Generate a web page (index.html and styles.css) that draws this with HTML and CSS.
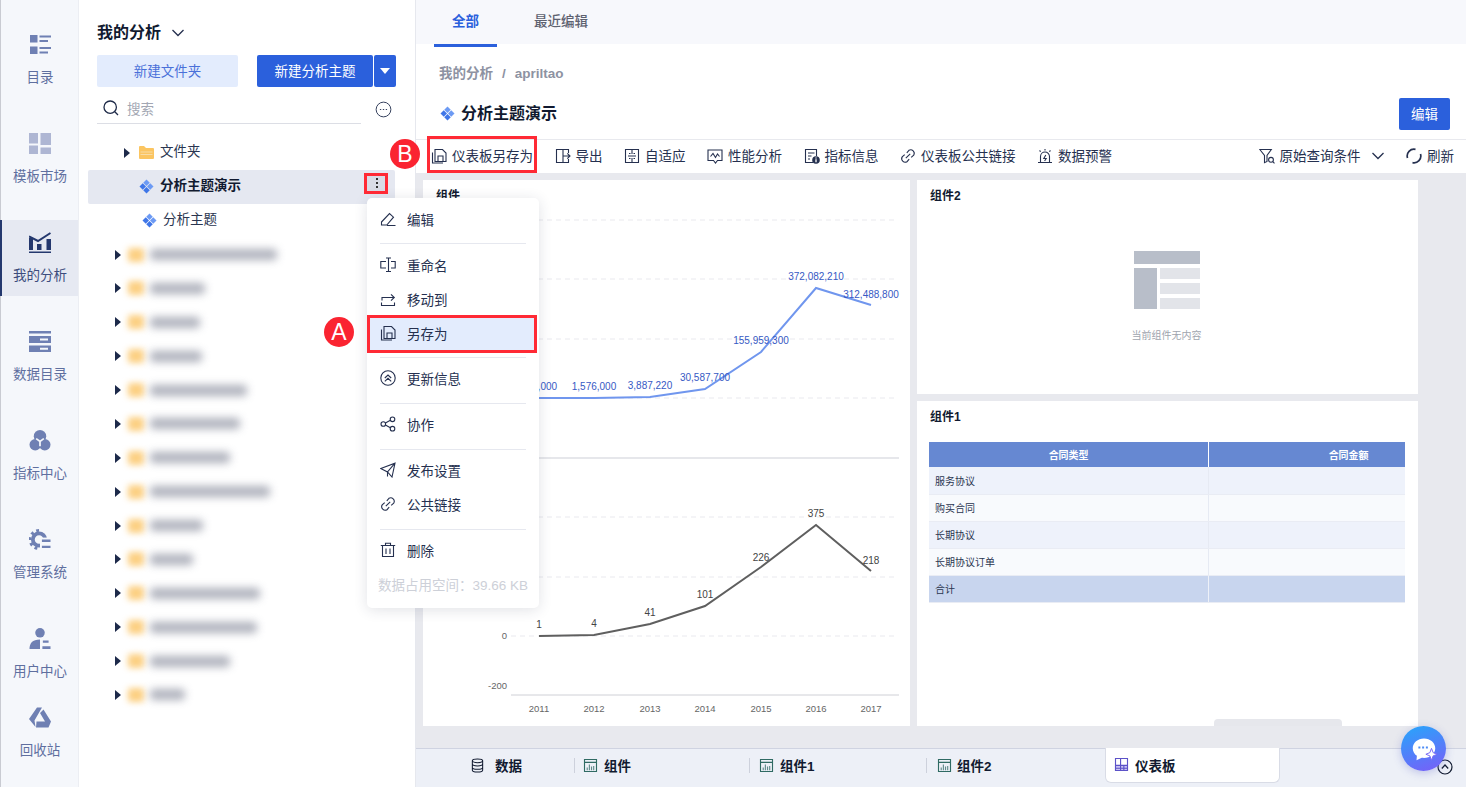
FILE: index.html
```html
<!DOCTYPE html>
<html lang="zh-CN">
<head>
<meta charset="utf-8">
<title>我的分析</title>
<link rel="stylesheet" href="styles.css">
</head>
<body>
<svg class="defs" aria-hidden="true">
  <symbol id="i-diamond" viewBox="0 0 16 16">
    <path fill="#6c9af4" d="M8 .5 11.500 4 8 7.500 4.500 4z"/>
    <path fill="#3f76e8" d="M4 4.500 7.500 8 4 11.500.5 8z"/>
    <path fill="#6c9af4" d="M12 4.500 15.500 8 12 11.500 8.500 8z"/>
    <path fill="#3f76e8" d="M8 8.500 11.500 12 8 15.500 4.500 12z"/>
  </symbol>
  <symbol id="i-saveas" viewBox="0 0 16 16"><path d="M4 1.500h7.500L15 5v8.500H4zM7 13.500V8h5v5.500M1.500 4.500v10.500h10.500"/></symbol>
  <symbol id="i-link" viewBox="0 0 16 16"><path d="M6.800 4.800 8.900 2.300a3.500 3.500 0 0 1 4.800 4.800L11.200 9.300M9.200 11.200 7 13.700a3.500 3.500 0 0 1-4.800-4.800L4.700 6.700M5.800 10.200l4.400-4.400"/></symbol>
  <symbol id="i-chart" viewBox="0 0 16 16"><path fill="none" stroke="#2f6a63" stroke-width="1.200" d="M1.600 1.600h12.800v12.800H1.600zM1.600 4.600h12.800"/><path fill="none" stroke="#5f8a8a" stroke-width="1.200" d="M4.500 13v-3M6.800 13V7M9.100 13v-4M11.400 13V8.500"/></symbol>
</svg>

<div class="app">
  <nav class="nav">
    <a class="nav-item">
      <svg class="nav-ic" viewBox="0 0 22 21"><path fill="#6f80b3" d="M1 1h7.500v7.500H1zM1 12.500h7.500V20H1zM10.500 1.500H22v2H10.500zM10.500 6H19v2h-8.500zM10.500 13H22v2H10.500zM10.500 17.500H19v2h-8.500z"/></svg>
      <span>目录</span>
    </a>
    <a class="nav-item">
      <svg class="nav-ic" viewBox="0 0 22 21"><path fill="#aeb6d3" d="M0 0h9v10.500H0zM11.500 0H22v12H11.500zM0 12.500h9V21H0zM11.500 14.500H22V21H11.500z"/></svg>
      <span>模板市场</span>
    </a>
    <a class="nav-item is-active">
      <svg class="nav-ic" viewBox="0 0 22 21"><path fill="#24386e" d="M0 6h4v12H0zM8 12h4.500v6H8zM17.500 7H22v11h-4.500zM0 19.500h22V21H0z"/><path fill="none" stroke="#24386e" stroke-width="2" d="M0 4.500l9 4.500 12.500-8"/></svg>
      <span>我的分析</span>
    </a>
    <a class="nav-item">
      <svg class="nav-ic" viewBox="0 0 22 21"><path fill="#6f80b3" d="M0 0h22v2.500H0zM0 5h22v7H0zM0 14.500h22V21H0z"/><path fill="#f5f7fb" d="M11 7.500h8v2h-8zM11 16.800h8v2h-8z"/></svg>
      <span>数据目录</span>
    </a>
    <a class="nav-item">
      <svg class="nav-ic" viewBox="0 0 22 22"><circle cx="11" cy="6.500" r="6.500" fill="#6f80b3"/><circle cx="6" cy="15.500" r="6" fill="#6f80b3"/><circle cx="16" cy="15.500" r="6" fill="#6f80b3"/><path fill="none" stroke="#f5f7fb" stroke-width="1.800" d="M7 9l4 3 4-3M11 12v5"/></svg>
      <span>指标中心</span>
    </a>
    <a class="nav-item">
      <svg class="nav-ic" viewBox="0 0 22 22"><circle cx="10" cy="11" r="6.500" fill="none" stroke="#6f80b3" stroke-width="4"/><path fill="none" stroke="#6f80b3" stroke-width="3" stroke-dasharray="3 3.200" d="M10 1.500a9.500 9.500 0 1 0 0 19"/><path fill="#f5f7fb" d="M11 9h11v13H11z"/><path fill="#6f80b3" d="M13 11h9v2.500h-9zM13 17.500h9V20h-9z"/></svg>
      <span>管理系统</span>
    </a>
    <a class="nav-item">
      <svg class="nav-ic" viewBox="0 0 22 22"><circle cx="11" cy="5" r="5" fill="#6f80b3"/><path fill="#6f80b3" d="M0 22c0-6 3-10 11-10v10zM14 13h6v2.500h-6zM13.500 19H22v3h-8.500z"/></svg>
      <span>用户中心</span>
    </a>
    <a class="nav-item nav-last">
      <svg class="nav-ic" viewBox="0 0 22 21"><path fill="#6f80b3" d="M8 .5h5L5.500 13.500 6.500 20 0 12zM14.500 2.500 22 14.500h-6L11 6zM7.500 14.500H22l-2.500 6H7z"/></svg>
      <span>回收站</span>
    </a>
  </nav>

  <aside class="panel">
    <div class="panel-head">
      <h2>我的分析</h2>
      <svg class="chev" viewBox="0 0 14 14"><path d="M1.500 4 7 9.500 12.500 4"/></svg>
    </div>
    <div class="panel-btns">
      <button class="btn btn-light">新建文件夹</button>
      <button class="btn btn-blue btn-new">新建分析主题</button>
      <button class="btn btn-blue btn-arrow"><i class="tri-down"></i></button>
    </div>
    <div class="search-row">
      <div class="search">
        <svg class="search-ic" viewBox="0 0 16 16"><circle cx="7.200" cy="7.200" r="6.200"/><path d="M11.800 11.800 15 15"/></svg>
        <span>搜索</span>
      </div>
      <svg class="more-ic" viewBox="0 0 18 18"><circle cx="9" cy="9" r="7.800"/><path d="M5.200 9h1.400M8.300 9h1.400M11.400 9h1.400"/></svg>
    </div>

    <ul class="tree">
      <li class="row row-l1">
        <i class="tri"></i>
        <svg class="folder" viewBox="0 0 15 13"><path fill="#fbc561" d="M0 1a1 1 0 0 1 1-1h4l2 2h7a1 1 0 0 1 1 1v9a1 1 0 0 1-1 1H1a1 1 0 0 1-1-1z"/><path fill="#f8dca6" d="M1.500 5.500h12v1h-12zM1.500 8h12v1h-12z"/></svg>
        <span>文件夹</span>
      </li>
      <li class="row row-sel">
        <svg class="dia"><use href="#i-diamond"/></svg>
        <b>分析主题演示</b>
        <span class="kebab"><i></i><i></i><i></i></span>
      </li>
      <li class="row row-l2">
        <svg class="dia"><use href="#i-diamond"/></svg>
        <span>分析主题</span>
      </li>
      <li class="row row-blur"><i class="tri"></i><i class="blur-f"></i><i class="blur-t" style="width:127px"></i></li>
      <li class="row row-blur"><i class="tri"></i><i class="blur-f"></i><i class="blur-t" style="width:55px"></i></li>
      <li class="row row-blur"><i class="tri"></i><i class="blur-f"></i><i class="blur-t" style="width:50px"></i></li>
      <li class="row row-blur"><i class="tri"></i><i class="blur-f"></i><i class="blur-t" style="width:52px"></i></li>
      <li class="row row-blur"><i class="tri"></i><i class="blur-f"></i><i class="blur-t" style="width:97px"></i></li>
      <li class="row row-blur"><i class="tri"></i><i class="blur-f"></i><i class="blur-t" style="width:90px"></i></li>
      <li class="row row-blur"><i class="tri"></i><i class="blur-f"></i><i class="blur-t" style="width:80px"></i></li>
      <li class="row row-blur"><i class="tri"></i><i class="blur-f"></i><i class="blur-t" style="width:120px"></i></li>
      <li class="row row-blur"><i class="tri"></i><i class="blur-f"></i><i class="blur-t" style="width:53px"></i></li>
      <li class="row row-blur"><i class="tri"></i><i class="blur-f"></i><i class="blur-t" style="width:43px"></i></li>
      <li class="row row-blur"><i class="tri"></i><i class="blur-f"></i><i class="blur-t" style="width:110px"></i></li>
      <li class="row row-blur"><i class="tri"></i><i class="blur-f"></i><i class="blur-t" style="width:107px"></i></li>
      <li class="row row-blur"><i class="tri"></i><i class="blur-f"></i><i class="blur-t" style="width:80px"></i></li>
      <li class="row row-blur"><i class="tri"></i><i class="blur-f"></i><i class="blur-t" style="width:35px"></i></li>
    </ul>
  </aside>

  <main class="main">
    <div class="tabs">
      <a class="tab is-on">全部</a>
      <a class="tab">最近编辑</a>
    </div>
    <div class="crumbs"><span>我的分析</span><span class="sl">/</span><span>apriltao</span></div>
    <div class="title-row">
      <svg class="dia"><use href="#i-diamond"/></svg>
      <h1>分析主题演示</h1>
      <button class="btn btn-blue btn-edit">编辑</button>
    </div>
    <div class="toolbar">
      <a class="tool"><svg class="ic"><use href="#i-saveas"/></svg>仪表板另存为</a>
      <a class="tool"><svg class="ic" viewBox="0 0 16 16"><path d="M8 1.500H1.500v13H8zM8 1.500h5.500V5M13.500 11v3.500H8M8 8h7M12.300 5.300 15 8l-2.700 2.700"/></svg>导出</a>
      <a class="tool"><svg class="ic" viewBox="0 0 16 16"><path d="M1.500 1.500h13v13h-13zM8 1.500v4.500M8 10v4.500M4 8h8M5 5.500h1.500M9.500 5.500H11M5 10.500h1.500M9.500 10.500H11"/></svg>自适应</a>
      <a class="tool"><svg class="ic" viewBox="0 0 16 16"><path d="M1 2h14v10.500h-4.500L8.500 15l-2-2.500H1zM3.500 8.500 6 5.500l2.500 4 2-3.500 2 2.500"/></svg>性能分析</a>
      <a class="tool"><svg class="ic" viewBox="0 0 16 16"><path d="M9 14.500H1.500v-13h11V8M4 5h6.500M4 8h3.500M4 11h2"/><circle class="solid" cx="12" cy="12" r="3.800"/><path class="white" d="M12 11.200V14.200M12 9.600v.9"/></svg>指标信息</a>
      <a class="tool"><svg class="ic"><use href="#i-link"/></svg>仪表板公共链接</a>
      <a class="tool"><svg class="ic" viewBox="0 0 16 16"><path d="M3.500 14V8.500a4.500 4.500 0 0 1 9 0V14M1 14.500h14M8 1v1.500M2.500 2.500l1.200 1.200M13.500 2.500l-1.200 1.200M8.800 7 6.800 10.500h2.400l-1.600 2.500"/></svg>数据预警</a>
      <span class="tool-right">
        <a class="tool"><svg class="ic" viewBox="0 0 16 16"><path d="M.8 1.500h11.500L8 7.500v6l-2.500 1.200V7.500z"/><circle cx="12" cy="11.800" r="2.400"/><path d="M13.800 13.600 15.500 15.300"/></svg>原始查询条件<svg class="chev tool-chev" viewBox="0 0 14 14"><path d="M1.500 4 7 9.500 12.500 4"/></svg></a>
        <a class="tool"><svg class="ic ic-bold" viewBox="0 0 16 16"><path d="M1.500 10A6.800 6.800 0 0 1 9.500 1.400M14.500 6A6.800 6.800 0 0 1 6.500 14.600"/></svg>刷新</a>
      </span>
    </div>

    <div class="board">
      <section class="widget w-chart">
        <h3>组件</h3>
        <svg class="chart" viewBox="423 213 487 513">
          <g class="grid">
            <path d="M511 220H898M511 279H898M511 339H898M511 398H898M511 517H898M511 577H898M511 636H898"/>
          </g>
          <path class="split" d="M511 458H899"/>
          <path class="axis" d="M511 695H899"/>
          <polyline class="l-blue" points="539,398 594,398 650,397 705,389 761,352 816,288 871,305"/>
          <polyline class="l-gray" points="539,636 594,635 650,624 705,606 761,567 816,525 871,571"/>
          <g class="t-blue">
            <text x="539" y="390">520,000</text>
            <text x="594" y="390">1,576,000</text>
            <text x="650" y="389">3,887,220</text>
            <text x="705" y="381">30,587,700</text>
            <text x="761" y="344">155,959,300</text>
            <text x="816" y="280">372,082,210</text>
            <text x="871" y="298">312,488,800</text>
          </g>
          <g class="t-gray">
            <text x="539" y="628">1</text>
            <text x="594" y="627">4</text>
            <text x="650" y="616">41</text>
            <text x="705" y="598">101</text>
            <text x="761" y="561">226</text>
            <text x="816" y="517">375</text>
            <text x="871" y="564">218</text>
          </g>
          <g class="t-axis t-y">
            <text x="507" y="639">0</text>
            <text x="507" y="689">-200</text>
          </g>
          <g class="t-axis">
            <text x="539" y="712">2011</text>
            <text x="594" y="712">2012</text>
            <text x="650" y="712">2013</text>
            <text x="705" y="712">2014</text>
            <text x="761" y="712">2015</text>
            <text x="816" y="712">2016</text>
            <text x="871" y="712">2017</text>
          </g>
        </svg>
      </section>

      <section class="widget w-empty">
        <h3>组件2</h3>
        <div class="empty">
          <div class="ph">
            <i class="ph-top"></i><i class="ph-left"></i><i class="ph-r"></i><i class="ph-r"></i><i class="ph-r"></i>
          </div>
          <p>当前组件无内容</p>
        </div>
      </section>

      <section class="widget w-table">
        <h3>组件1</h3>
        <div class="tbl-wrap">
          <table class="tbl">
            <thead><tr><th>合同类型</th><th>合同金额</th></tr></thead>
            <tbody>
              <tr><td>服务协议</td><td></td></tr>
              <tr><td>购买合同</td><td></td></tr>
              <tr><td>长期协议</td><td></td></tr>
              <tr><td>长期协议订单</td><td></td></tr>
              <tr class="sum"><td>合计</td><td></td></tr>
            </tbody>
          </table>
        </div>
        <i class="hscroll"></i>
      </section>
    </div>

    <footer class="dock">
      <a class="dock-item d-data"><svg class="ic ic-db" viewBox="0 0 16 16"><ellipse cx="8" cy="3" rx="5.500" ry="2"/><path d="M2.500 3v10c0 1.100 2.500 2 5.500 2s5.500-.9 5.500-2V3M2.500 6.500c0 1.100 2.500 2 5.500 2s5.500-.9 5.500-2M2.500 10c0 1.100 2.500 2 5.500 2s5.500-.9 5.500-2"/></svg>数据</a>
      <a class="dock-item d-w1"><svg class="ic-chart"><use href="#i-chart"/></svg>组件</a>
      <a class="dock-item d-w2"><svg class="ic-chart"><use href="#i-chart"/></svg>组件1</a>
      <a class="dock-item d-w3"><svg class="ic-chart"><use href="#i-chart"/></svg>组件2</a>
      <a class="dock-item d-board"><svg class="ic-chart" viewBox="0 0 16 16"><path fill="#c9c3f3" d="M7 9h8v6H7zM1 9h6v6H1z"/><path fill="none" stroke="#5c52c8" stroke-width="1.200" d="M1.600 1.600h12.800v12.800H1.600zM7 1.600v12.800M1.600 9h12.800M1.600 12h12.800M10.500 9v5.400"/></svg>仪表板</a>
      <svg class="dock-up" viewBox="0 0 16 16"><circle cx="8" cy="8" r="7"/><path d="M4.800 9.500 8 6l3.200 3.500"/></svg>
    </footer>
  </main>

  <div class="menu">
    <a class="m-item"><svg class="ic" viewBox="0 0 16 16"><path d="M1.500 11 9.500 2.500l4 3.700L6.800 14H1.500zM7 14.500h8.500"/></svg>编辑</a>
    <hr>
    <a class="m-item"><svg class="ic" viewBox="0 0 16 16"><path d="M6 4.500H.8v6.500H6M11 4.500h4.200v6.500H11M6 1h5M6 14.500h5M8.500 1v13.500"/></svg>重命名</a>
    <a class="m-item"><svg class="ic" viewBox="0 0 16 16"><path d="M2 9.500V6.500h12M11 3.300l3.300 3.200-3.300 3.200M1.500 11.500v3h13v-3"/></svg>移动到</a>
    <a class="m-item is-hl"><svg class="ic"><use href="#i-saveas"/></svg>另存为</a>
    <hr>
    <a class="m-item"><svg class="ic" viewBox="0 0 16 16"><circle cx="8" cy="8" r="7.200"/><path d="M4.800 8 8 5l3.200 3M4.800 11.300 8 8.300l3.200 3"/></svg>更新信息</a>
    <hr>
    <a class="m-item"><svg class="ic" viewBox="0 0 16 16"><circle cx="3.300" cy="8" r="2.300"/><circle cx="12.500" cy="3.300" r="2.300"/><circle cx="12.500" cy="12.700" r="2.300"/><path d="M5.400 7 10.400 4.300M5.400 9 10.400 11.700"/></svg>协作</a>
    <hr>
    <a class="m-item"><svg class="ic" viewBox="0 0 16 16"><path d="M.8 6.500 15 1.200l-3 13.800-4.500-5zM15 1.200 7.500 10v4.500"/></svg>发布设置</a>
    <a class="m-item"><svg class="ic"><use href="#i-link"/></svg>公共链接</a>
    <hr>
    <a class="m-item"><svg class="ic" viewBox="0 0 16 16"><path d="M.8 3.500h14.400M5.500 3.500V1.200h5v2.300M2.500 3.500v11h11v-11M6 6.500v5.500M10 6.500v5.500"/></svg>删除</a>
    <p class="m-foot">数据占用空间：39.66 KB</p>
  </div>

  <i class="mark mark-kebab"></i>
  <i class="mark mark-menu"></i>
  <i class="mark mark-tool"></i>
  <b class="badge badge-a">A</b>
  <b class="badge badge-b">B</b>
  <div class="chat">
    <svg viewBox="0 0 24 24"><path fill="#fff" d="M12 3.500c-5 0-9 3.400-9 7.800 0 2.500 1.300 4.700 3.300 6.100L6 21l4.200-2c.6.100 1.200.1 1.800.1 5 0 9-3.400 9-7.800s-4-7.800-9-7.800z"/><path fill="#4d8cf5" d="M7.500 10h1.600v1.600H7.500zM10.500 10h1.600v1.600h-1.600zM13.500 10h1.600v1.600h-1.600z"/><path fill="#fff" stroke="#7b6cf6" stroke-width=".8" d="M18 11.500l1.300 3.400 3.200 1.300-3.200 1.300L18 21l-1.300-3.500-3.200-1.300 3.200-1.300z"/></svg>
  </div>
</div>
</body>
</html>
```

FILE: styles.css
```css
* { box-sizing: border-box; }
html, body { margin: 0; padding: 0; }
body {
  font-family: "Liberation Sans", "Noto Sans CJK SC", sans-serif;
  font-size: 13.5px;
  color: #1d2a4a;
  background: #fff;
}
h1, h2, h3, p, ul { margin: 0; padding: 0; }
ul { list-style: none; }
i { display: block; font-style: normal; }
button { font: inherit; border: 0; padding: 0; }
.defs { position: absolute; width: 0; height: 0; }

.app {
  position: relative;
  display: flex;
  width: 1466px;
  height: 787px;
  overflow: hidden;
}

/* left navigation */
.nav {
  flex: 0 0 79px;
  display: flex;
  flex-direction: column;
  padding-top: 22px;
  background: #f5f7fb;
  border-left: 1px solid #c9cbd2;
  border-right: 1px solid #eceef3;
}
.nav-item {
  flex: none;
  height: 76px;
  margin-bottom: 23px;
  margin-left: -1px;
  display: flex;
  flex-direction: column;
  align-items: center;
  color: #5f6f9f;
  padding-top: 12px;
  border-left: 2px solid transparent;
}
.nav-item span { margin-top: 13px; line-height: 20px; }
.nav-ic { width: 22px; height: 21px; }
.nav-item.is-active { background: #e6e9f2; border-left-color: #24386e; color: #3c4c7d; }
.nav-item:nth-last-child(2) { margin-bottom: 3px; }
.nav-last { margin-bottom: 0; }

/* tree panel */
.panel {
  flex: 0 0 337px;
  background: #fff;
  border-right: 1px solid #e6e8ee;
  display: flex;
  flex-direction: column;
}
.panel-head {
  height: 24px;
  margin: 21px 0 10px 18px;
  display: flex;
  align-items: center;
}
.panel-head h2 { font-size: 16px; font-weight: 700; color: #111a30; line-height: 24px; }
.chev { fill: none; stroke: #25304f; stroke-width: 1.300; width: 14px; height: 14px; }
.panel-head .chev { margin-left: 10px; }
.panel-btns { display: flex; margin-left: 18px; height: 32px; }
.btn { border-radius: 2px; cursor: pointer; padding-bottom: 3px; }
.btn-light { width: 141px; background: #e3ecfd; color: #4a70d9; margin-right: 19px; }
.btn-blue { background: #2b60dc; color: #fff; }
.btn-new { width: 116px; margin-right: 1px; }
.btn-arrow { width: 22px; padding-bottom: 0; display: flex; align-items: center; justify-content: center; }
.tri-down { width: 0; height: 0; border: 5px solid transparent; border-top: 6px solid #fff; border-bottom: 0; }

.search-row { display: flex; align-items: center; height: 37px; margin-left: 18px; }
.search {
  width: 264px;
  height: 37px;
  padding: 5px 0 0 6px;
  border-bottom: 1px solid #dcdee5;
  display: flex;
  align-items: center;
  color: #a3a7b3;
}
.search span { margin-left: 8px; }
.search-ic { width: 16px; height: 16px; fill: none; stroke: #1f2b49; stroke-width: 1.300; }
.more-ic { width: 17px; height: 17px; margin: 7px 0 0 14px; fill: none; stroke: #2b3654; stroke-width: 1; }

.tree { margin: 12px 20px 0 9px; }
.row { height: 33.875px; display: flex; align-items: center; color: #2a3550; }
.row-l1 span, .row-l2 span, .row-sel b { margin-bottom: 6px; }
.tri { flex: none; width: 0; height: 0; border: 5px solid transparent; border-left: 6px solid #1d2a4a; border-right: 0; }
.row-l1 { padding-left: 36px; }
.row-l1 .folder { width: 15px; height: 13px; margin: 0 6px 0 9px; }
.row-sel { position: relative; padding-left: 51px; background: #e5e8f1; border-radius: 2px; color: #111a30; }
.row-sel b { font-weight: 700; }
.dia { width: 15px; height: 15px; flex: none; margin-right: 6px; }
.row-l2 { padding-left: 54px; }
.row .kebab {
  position: absolute;
  right: 7px;
  top: 3px;
  width: 23px;
  height: 20px;
  margin: 0;
  background: #d9dce6;
  display: flex;
  flex-direction: column;
  align-items: center;
  justify-content: center;
  gap: 2px;
}
.kebab i { width: 2px; height: 2px; background: #333; }
.row-blur { padding-left: 27px; }
.blur-f { width: 16px; height: 14px; margin: 0 6px 0 7px; background: #fcd083; border-radius: 2px; filter: blur(3px); }
.blur-t { height: 11px; background: #a6a9b5; border-radius: 4px; filter: blur(4px); opacity: .9; }

/* main */
.main { flex: 1; min-width: 0; display: flex; flex-direction: column; background: #fff; }
.tabs { height: 44px; background: #f7f8fc; display: flex; padding-left: 18px; }
.tab { position: relative; width: 63px; height: 47px; line-height: 43px; text-align: center; color: #5e6270; font-weight: 500; margin-right: 1px; }
.tab + .tab { width: 92px; margin-left: 17px; text-align: center; }
.tab.is-on { color: #2b60dc; font-weight: 700; border-bottom: 3px solid #2b60dc; }
.crumbs { height: 20px; margin: 20px 0 0 23px; color: #8d92a2; font-weight: 700; line-height: 20px; display: flex; }
.sl { margin: 0 9px; }
.title-row { height: 32px; margin-top: 14px; padding: 0 16px 0 24px; display: flex; align-items: center; }
.title-row h1 { font-size: 16px; font-weight: 700; color: #111a30; margin-bottom: 4px; }
.title-row .dia { margin-top: -2px; }
.btn-edit { width: 51px; height: 32px; margin-left: auto; }

.toolbar {
  flex: none;
  height: 33px;
  margin-top: 9px;
  box-sizing: content-box;
  border-top: 1px solid #e8e9ee;
  padding-left: 15px;
  display: flex;
  align-items: center;
  gap: 21.500px;
  color: #25304f;
}
.tool { display: flex; align-items: center; white-space: nowrap; padding-bottom: 4px; }
.ic { width: 15px; height: 15px; flex: none; fill: none; stroke: #25304f; stroke-width: 1.100; margin-right: 6px; }
.tool .ic { width: 16px; height: 16px; margin: 2px 5px 0 0; }
.ic .solid { fill: #25304f; stroke: none; }
.ic .white { stroke: #fff; stroke-width: 1.300; }
.ic-bold { stroke-width: 1.700; }
.tool-right { margin-left: auto; display: flex; padding-right: 12px; gap: 21.500px; }
.tool-chev { margin: 2px 0 0 10px; }

/* dashboard */
.board {
  flex: none;
  height: 575px;
  background: #e8e9ee;
  padding: 7px 48px 22px 7px;
  display: grid;
  grid-template-columns: 487px 501px;
  grid-template-rows: 214px 325px;
  gap: 7px;
}
.widget { position: relative; background: #fff; }
.widget h3 { font-size: 12px; line-height: 18px; font-weight: 700; color: #111a30; padding: 7px 0 0 13px; height: 33px; }
.w-chart { grid-row: 1 / 3; }
.chart { display: block; width: 487px; height: 513px; font-family: "Liberation Sans", sans-serif; }
.grid path { fill: none; stroke: #e9e9ee; stroke-width: 1; stroke-dasharray: 5 4; }
.split { fill: none; stroke: #dedfe4; stroke-width: 1.500; }
.axis { fill: none; stroke: #cfd0d6; stroke-width: 1; }
.l-blue { fill: none; stroke: #7096ee; stroke-width: 2; }
.l-gray { fill: none; stroke: #5f5f5f; stroke-width: 2; }
.chart text { text-anchor: middle; font-size: 10px; }
.t-blue text { fill: #3659c4; }
.t-gray text { fill: #444; }
.t-axis text { fill: #666; font-size: 9.500px; }
.chart .t-y text { text-anchor: end; }

.empty { display: flex; flex-direction: column; align-items: center; margin-top: 38px; margin-left: -2px; }
.ph {
  width: 66px;
  height: 58px;
  display: grid;
  grid-template-columns: 23px 40px;
  grid-template-rows: 13px 11px 11px 11px;
  gap: 4px 3px;
}
.ph-top { grid-column: 1 / 3; background: #b8bec9; }
.ph-left { grid-row: 2 / 5; background: #b8bec9; }
.ph-r { background: #e2e4e9; }
.empty p { margin-top: 20px; font-size: 10px; line-height: 14px; color: #a0a4ae; }

.tbl-wrap { width: 476px; margin: 8px 0 0 12px; overflow: hidden; }
.tbl {
  width: 560px;
  border-collapse: collapse;
  table-layout: fixed;
  font-size: 10px;
}
.tbl th { height: 25px; background: #6688d2; color: #fff; font-weight: 700; border-right: 1px solid #fff; padding: 0; text-align: center; }
.tbl td { height: 27px; padding: 0 0 0 6px; color: #2a3550; border-right: 1px solid #e6eaf3; border-bottom: 1px solid #e9ecf4; }
.tbl tbody tr:nth-child(odd) td { background: #eef2fb; }
.tbl tbody tr:nth-child(even) td { background: #f8fafd; }
.tbl tbody tr.sum td { background: #c8d5ee; border-right-color: #eef1f8; }
.hscroll { position: absolute; left: 297px; bottom: 0; width: 128px; height: 7px; background: #e6e7ec; border-radius: 4px 4px 0 0; }

/* bottom dock */
.dock {
  position: relative;
  flex: 1;
  background: #edf0f7;
  border-top: 1px solid #cfd3e1;
  font-weight: 700;
  color: #111a30;
  display: flex;
  align-items: flex-start;
}
.dock-item { display: flex; align-items: center; height: 32px; }
.ic-db { margin-right: 10px; stroke: #111a30; }
.ic-chart { width: 15px; height: 15px; margin-right: 6px; flex: none; }
.d-data { margin-left: 54px; width: 104px; }
.d-w1, .d-w2, .d-w3 { padding-left: 9px; position: relative; }
.d-w1::before, .d-w2::before, .d-w3::before { content: ""; position: absolute; left: 0; top: 9px; width: 1px; height: 15px; background: #cdd1dc; }
.d-w1 { width: 175px; }
.d-w2 { width: 177px; padding-left: 10px; }
.d-w3 { width: 179px; padding-left: 11px; }
.d-w3 .ic-chart { margin-right: 5px; }
.d-board {
  width: 175px;
  height: 35px;
  margin-top: -1px;
  padding: 0 0 1px 8px;
  background: #fff;
  border: 1px solid #d9dce6;
  border-top: 0;
  border-radius: 0 0 6px 6px;
}
.dock-up { position: absolute; left: 1021px; top: 10px; width: 16px; height: 16px; fill: none; stroke: #111a30; stroke-width: 1.200; }

/* floating menu */
.menu {
  position: absolute;
  left: 367px;
  top: 198px;
  width: 172px;
  height: 410px;
  padding-top: 5px;
  background: #fff;
  border-radius: 5px;
  box-shadow: 0 2px 14px rgba(40, 50, 80, .14);
  color: #25304f;
}
.m-item { display: flex; align-items: center; height: 34px; padding-left: 13px; padding-bottom: 2px; }
.is-hl ~ .m-item { padding-bottom: 4px; }
.m-item .ic { width: 16px; height: 16px; margin-right: 11px; }
.m-item.is-hl { background: #e3ecfd; width: 170px; }
.menu hr { margin: 6px 13px 5px; border: 0; border-top: 1px solid #e6e8ef; height: 0; box-sizing: content-box; }
.m-foot { height: 34px; line-height: 34px; padding-left: 11px; color: #cdd0d8; white-space: nowrap; }

/* annotations */
.mark { position: absolute; border: 3px solid #ff2a35; }
.mark-kebab { left: 364px; top: 173px; width: 24px; height: 21px; }
.mark-menu { left: 367px; top: 315px; width: 170px; height: 38px; }
.mark-tool { left: 427px; top: 136px; width: 110px; height: 37px; }
.badge {
  position: absolute;
  width: 30px;
  height: 30px;
  border-radius: 50%;
  background: #fa2431;
  color: #fff;
  font-family: "Liberation Sans", sans-serif;
  font-weight: 400;
  font-size: 23px;
  line-height: 30px;
  text-align: center;
}
.badge-a { left: 324px; top: 317px; }
.badge-b { left: 390px; top: 139px; }
.chat {
  position: absolute;
  left: 1401px;
  top: 726px;
  width: 45px;
  height: 45px;
  border-radius: 50%;
  background: linear-gradient(160deg, #25a7fb, #7b5cf8);
  display: flex;
  align-items: center;
  justify-content: center;
  box-shadow: 0 2px 8px rgba(80, 90, 200, .3);
}
.chat svg { width: 30px; height: 30px; }
```
